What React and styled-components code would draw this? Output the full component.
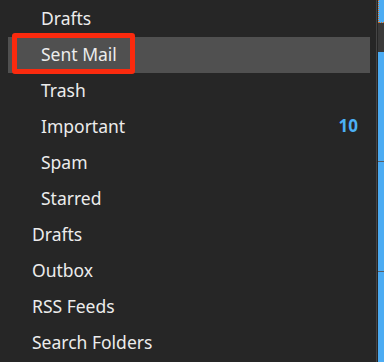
import React from "react";
import styled, { createGlobalStyle } from "styled-components";

const GlobalStyle = createGlobalStyle`
  html, body {
    margin: 0;
    padding: 0;
    background: #262626;
    overflow: hidden;
  }
`;

const Page = styled.div`
  width: 384px;
  height: 362px;
  display: flex;
  background: #262626;
  font-family: "Noto Sans", "Open Sans", sans-serif;
`;

const Sidebar = styled.div`
  width: 376px;
  padding-top: 1px;
  display: flex;
  flex-direction: column;
`;

const Row = styled.div`
  position: relative;
  box-sizing: border-box;
  height: 36px;
  margin: 0 6px 0 8px;
  padding: 0 12px 3px ${(p) => (p.$sub ? 33 : 24)}px;
  display: flex;
  align-items: center;
  justify-content: space-between;
  background: ${(p) => (p.$selected ? "#505050" : "transparent")};
  color: #ececec;
  font-size: 17.5px;
  flex-shrink: 0;
`;

const Count = styled.span`
  color: #4cb0f5;
  font-weight: 700;
  font-size: 17px;
`;

const Highlight = styled.div`
  position: absolute;
  left: 4px;
  top: -4px;
  width: 123px;
  height: 41px;
  box-sizing: border-box;
  border: 5px solid #fa2a0e;
  border-radius: 3px;
  pointer-events: none;
`;

const Splitter = styled.div`
  width: 1px;
  background: #454545;
  margin-right: 1px;
`;

const Pane = styled.div`
  flex: 1;
  display: flex;
  flex-direction: column;
`;

const FocusCell = styled.div`
  height: 25px;
  background: #4cacf3;
  border-left: 1px dotted #e0701a;
  border-bottom: 1px dotted #e0701a;
`;

const GreyCell = styled.div`
  height: 34px;
  background: #3a3a3a;
`;

const BlueCell = styled.div`
  height: ${(p) => p.$h}px;
  background: #4cacf3;
  border-bottom: ${(p) => (p.$last ? "none" : "1px solid #5a5f66")};
  flex-shrink: 0;
`;

const folders = [
  { name: "Drafts", sub: true },
  { name: "Sent Mail", sub: true, selected: true },
  { name: "Trash", sub: true },
  { name: "Important", sub: true, count: 10 },
  { name: "Spam", sub: true },
  { name: "Starred", sub: true },
  { name: "Drafts" },
  { name: "Outbox" },
  { name: "RSS Feeds" },
  { name: "Search Folders" },
];

export default function App() {
  return (
    <>
      <GlobalStyle />
      <Page>
        <Sidebar>
          {folders.map((f, i) => (
            <Row key={i} $sub={f.sub} $selected={f.selected}>
              <span>{f.name}</span>
              {f.count && <Count>{f.count}</Count>}
              {f.selected && <Highlight />}
            </Row>
          ))}
        </Sidebar>
        <Splitter />
        <Pane>
          <FocusCell />
          <GreyCell />
          <BlueCell $h={109} />
          <BlueCell $h={109} />
          <BlueCell $h={90} $last />
        </Pane>
      </Page>
    </>
  );
}
